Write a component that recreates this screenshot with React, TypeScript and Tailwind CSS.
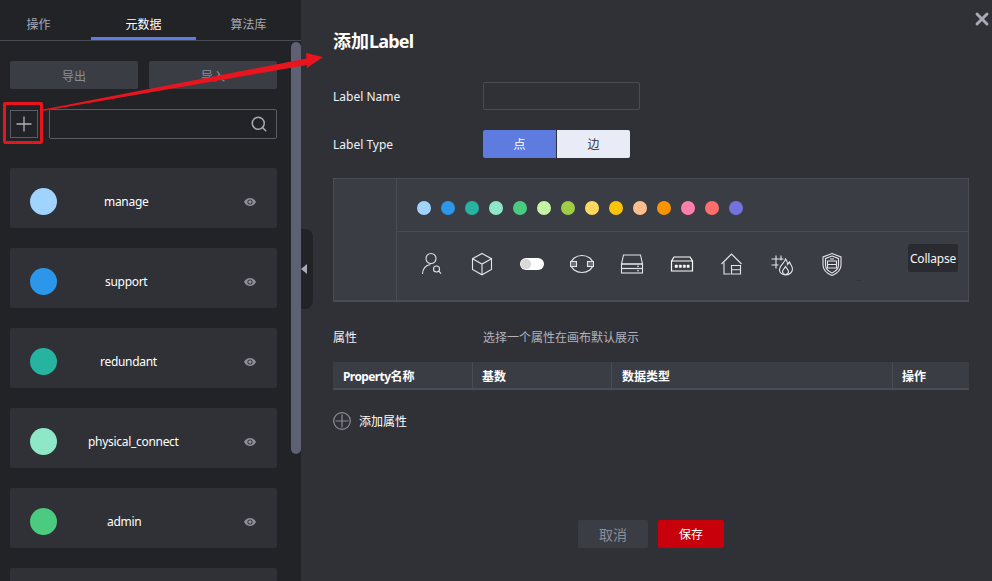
import { Search, Plus, X } from "lucide-react";

const labels = [
  { name: "manage", color: "bg-[#a0d4ff]", offset: "ml-[47px]" },
  { name: "support", color: "bg-[#2b96ea]", offset: "ml-[48px]" },
  { name: "redundant", color: "bg-[#26b3a0]", offset: "ml-[43px]" },
  { name: "physical_connect", color: "bg-[#8ee8c8]", offset: "ml-[31px]" },
  { name: "admin", color: "bg-[#4acb80]", offset: "ml-[50px]" },
  { name: "", color: "bg-[#c5f4a6]", offset: "ml-[50px]" },
];

const dots = [
  "bg-[#a0d4ff]",
  "bg-[#2b96ea]",
  "bg-[#26b3a0]",
  "bg-[#8ee8c8]",
  "bg-[#4acb80]",
  "bg-[#c5f4a6]",
  "bg-[#9dcc45]",
  "bg-[#ffd95f]",
  "bg-[#fdc50a]",
  "bg-[#ffbf8d]",
  "bg-[#f79400]",
  "bg-[#ff7eab]",
  "bg-[#ff6e6a]",
  "bg-[#7373dd]",
];

function IconSvg({ children }: { children: React.ReactNode }) {
  return (
    <svg width="24" height="24" viewBox="0 0 24 24" fill="none" stroke="#e4e5ea" strokeWidth="1.1">
      {children}
    </svg>
  );
}

function EyeMark() {
  return (
    <svg width="12" height="8" viewBox="0 0 12 8" className="ml-auto shrink-0">
      <path d="M0 4C1.500 1.500 3.500 0 6 0s4.500 1.500 6 4c-1.500 2.500-3.500 4-6 4S1.500 6.500 0 4z" fill="#8f929c" />
      <circle cx="6" cy="4" r="2.600" fill="#303136" />
      <circle cx="6" cy="4" r="1.700" fill="#8f929c" />
    </svg>
  );
}

const icons = [
  <IconSvg key="user">
    <circle cx="11" cy="6.5" r="5" />
    <path d="M2.500 22c0-5 3-9 8-9.500" />
    <circle cx="16.500" cy="17" r="3" />
    <path d="M18.800 19.200l2.200 2.400" />
  </IconSvg>,
  <IconSvg key="box">
    <path d="M12 1.500l9.500 5.200v10.800L12 22.800l-9.500-5.300V6.700z" />
    <path d="M2.500 6.700l9.500 5.300 9.500-5.300M12 12v10.800" />
  </IconSvg>,
  <svg key="toggle" width="24" height="24" viewBox="0 0 24 24">
    <rect x="0" y="6" width="24" height="12" rx="6" fill="#fff" />
    <circle cx="6" cy="12" r="5.200" fill="#d9d9d9" />
  </svg>,
  <IconSvg key="link">
    <ellipse cx="12" cy="12" rx="11" ry="8.500" />
    <rect x="0.500" y="9.500" width="6" height="5" fill="#6b6d75" />
    <rect x="17.500" y="9.500" width="6" height="5" fill="#6b6d75" />
  </IconSvg>,
  <IconSvg key="disk">
    <path d="M3.500 3h17l2 9H1.500z" />
    <rect x="1.500" y="12" width="21" height="4.500" />
    <rect x="1.500" y="16.500" width="21" height="4.500" />
    <path d="M17 14.200h2M17 18.700h2" />
  </IconSvg>,
  <svg key="switch" width="24" height="24" viewBox="0 0 24 24" fill="none" stroke="#fff" strokeWidth="1.2">
    <path d="M1.500 9l2.500-4h16l2.500 4v10h-21zM1.500 9h21" />
    <path d="M5 13h2.500v2.500H5zM9.200 13h2.300v2.500H9.200zM13.200 13h2.300v2.500h-2.300zM17 13h2.300v2.500H17z" fill="#fff" strokeWidth="0.4" />
  </svg>,
  <IconSvg key="home">
    <path d="M1.500 12L11.500 2l10 10" />
    <path d="M4 10.500V22h6.500" />
    <path d="M11.500 13.500h9V22h-9zM11.500 17.700h9" />
  </IconSvg>,
  <IconSvg key="fire">
    <path d="M1.500 7h12M1.500 13h7M6 3.500v13M11 3.500v5" />
    <path d="M15.500 7c0 3-6 6-6 11 0 3 3 5 6 5s7-2 7-6c0-3-2-4-3-7-1 1-1.500 2-2 2.500 0-2-.5-4-2-5.500z" />
    <path d="M15.500 22.500c-2 0-3-1.500-3-3 0-2 2-3 3-5 1 2 3 3 3 5 0 1.500-1 3-3 3z" />
  </IconSvg>,
  <IconSvg key="shield">
    <path d="M12 1.500l9 3.500v8c0 5-4 8.500-9 10.500-5-2-9-5.500-9-10.500V5z" />
    <path d="M12 4l6.500 2.500v6.500c0 4-3 6.500-6.500 8-3.500-1.500-6.500-4-6.500-8V6.500z" />
    <path d="M7.500 9h9v7h-9zM7.500 12.500h9M10 7h4" />
  </IconSvg>,
];

export default function App() {
  return (
    <div className="relative flex h-[581px] w-[992px] overflow-hidden bg-[#303136] text-[12px] text-[#f0f1f5] [font-family:'Noto_Sans','Noto_Sans_CJK_SC',sans-serif]">
      {/* left panel */}
      <aside className="relative h-full w-[301px] shrink-0 overflow-hidden bg-[#222327]">
        <div className="flex h-[41px] border-b border-[#4a4b55] text-[#a8abb5]">
          <div className="flex h-[40px] w-[77px] items-center justify-center pt-[9px]">操作</div>
          <div className="ml-[14px] flex h-[40px] w-[105px] items-center justify-center border-b-[3px] border-[#5e7ce0] pt-[12px] text-white">元数据</div>
          <div className="flex h-[40px] w-[105px] items-center justify-center pt-[9px]">算法库</div>
        </div>

        <div className="mt-[20px] flex gap-[11px] px-[10px]">
          <div className="flex h-[28px] w-[128px] items-center justify-center rounded-[2px] bg-[#3b3d45] pt-[3px] text-[#8a8e99]">导出</div>
          <div className="flex h-[28px] w-[128px] items-center justify-center rounded-[2px] bg-[#3b3d45] pt-[3px] text-[#8a8e99]">导入</div>
        </div>

        <div className="mt-[20px] flex items-center gap-[11px] px-[10px]">
          <div className="flex h-[28px] w-[28px] items-center justify-center border border-[#5a5c66] text-[#b0b3bc]">
            <Plus size={24} strokeWidth={1.3} />
          </div>
          <div className="flex h-[30px] w-[228px] items-center justify-end rounded-[2px] border border-[#5a5c66] pr-[8px] text-[#a8abb5]">
            <Search size={18} strokeWidth={2} />
          </div>
        </div>

        <div className="mt-[29px] flex flex-col gap-[20px] pl-[10px]">
          {labels.map((item, i) => (
            <div key={i} className="flex h-[60px] w-[267px] shrink-0 items-center rounded-[2px] bg-[#303136] pl-[20px] pr-[21px] pt-[7px]">
              <span className={`h-[27px] w-[27px] shrink-0 rounded-full ${item.color}`} />
              <span className={`whitespace-nowrap tracking-[-0.3px] text-white ${item.offset}`}>{item.name}</span>
              <EyeMark />
            </div>
          ))}
        </div>

        {/* scrollbar */}
        <div className="absolute left-[291px] top-[42px] h-[412px] w-[10px] rounded-[5px] bg-[#5e6174]" />
      </aside>

      {/* collapse handle */}
      <div className="absolute left-[301px] top-[229px] flex h-[80px] w-[12px] items-center rounded-r-[8px] bg-[#222327]">
        <span className="h-0 w-0 border-y-[5px] border-r-[6px] border-y-transparent border-r-[#a7a9b5]" />
      </div>

      {/* right panel */}
      <main className="flex-1 pl-[32px] pr-[23px] pt-[28px]">
        <h1 className="text-[18px] font-bold leading-[26px] text-white">
          添加<span className="tracking-[-0.8px]">Label</span>
        </h1>

        <div className="mt-[28px] flex h-[28px] items-center">
          <span className="w-[150px] pt-[2px]">Label Name</span>
          <div className="h-[28px] w-[157px] rounded-[2px] border border-[#4a4c55]" />
        </div>

        <div className="mt-[20px] flex h-[28px] items-center">
          <span className="w-[150px] pt-[2px]">Label Type</span>
          <div className="flex gap-px">
            <div className="flex h-[28px] w-[73px] items-center justify-center rounded-l-[2px] bg-[#5e7ce0] pt-[2px] text-white">点</div>
            <div className="flex h-[28px] w-[73px] items-center justify-center rounded-r-[2px] bg-[#e8ecf7] pt-[2px] text-[#333]">边</div>
          </div>
        </div>

        <div className="relative mt-[20px] flex h-[124px] w-[636px] border border-b-2 border-[#4a4c55] bg-[#3b3d45]">
          <div className="w-[63px] shrink-0 border-r border-[#4a4c55]" />
          <div className="flex flex-1 flex-col">
            <div className="flex h-[53px] items-center gap-[10px] border-b border-[#4a4c55] pl-[20px] pt-[6px]">
              {dots.map((dot, i) => (
                <span key={i} className={`h-[14px] w-[14px] rounded-full ${dot}`} />
              ))}
            </div>
            <div className="flex flex-1 items-start pl-[23px] pt-[20px]">
              <div className="flex gap-[26px]">
                {icons.map((icon, i) => (
                  <div key={i} className="h-[24px] w-[24px]">
                    {icon}
                  </div>
                ))}
              </div>
              <div className="-mt-[8px] ml-[64px] flex h-[28px] w-[50px] items-center justify-center rounded-[2px] bg-[#2a2b30] pt-[2px] tracking-[-0.2px] text-[#f5f6fa]">Collapse</div>
            </div>
          </div>
          <span className="absolute left-[522px] top-[98px] text-[7px] leading-[8px] text-[#2a2b30]">···</span>
        </div>

        <div className="mt-[26px] flex h-[18px] items-center">
          <span className="w-[150px] pt-[2px]">属性</span>
          <span className="pt-[2px] text-[#b0b3bc]">选择一个属性在画布默认展示</span>
        </div>

        <div className="mt-[16px] flex h-[28px] w-[636px] border-b-2 border-[#4a4c55] bg-[#3b3d45] font-bold text-white">
          <div className="flex w-[140px] items-center border-r border-[#4a4c55] pl-[10px] pt-[4px]">
            <span className="tracking-[-0.6px]">Property</span>名称
          </div>
          <div className="flex w-[139px] items-center border-r border-[#4a4c55] pl-[9px] pt-[4px]">基数</div>
          <div className="flex w-[281px] items-center border-r border-[#4a4c55] pl-[10px] pt-[4px]">数据类型</div>
          <div className="flex flex-1 items-center pl-[9px] pt-[4px]">操作</div>
        </div>

        <div className="mt-[22px] flex h-[18px] items-center gap-[8px]">
          <svg width="18" height="18" viewBox="0 0 18 18" fill="none" stroke="#8a8e99" strokeWidth="1.2">
            <circle cx="9" cy="9" r="8.300" />
            <path d="M9 2.500v13M2.500 9h13" />
          </svg>
          <span className="pt-[2px] text-white">添加属性</span>
        </div>

        <div className="mt-[90px] flex justify-center gap-[10px]">
          <div className="flex h-[28px] w-[70px] items-center justify-center rounded-[2px] bg-[#3b3d45] pt-[1px] text-[14px] text-[#8a8e99]">取消</div>
          <div className="flex h-[28px] w-[66px] items-center justify-center rounded-[2px] bg-[#c7000b] pt-[2px] text-white">保存</div>
        </div>
      </main>

      <X size={20} strokeWidth={3.5} className="absolute left-[972px] top-[9px] text-[#a8abb5]" />

      {/* annotation */}
      <div className="absolute left-[3px] top-[102px] h-[42px] w-[40px] rounded-[2px] border-[3px] border-[#e8141e]" />
      <svg className="absolute left-0 top-0" width="340" height="130" viewBox="0 0 340 130">
        <path d="M43 109.500L309 58l1 6.500L43 111z" fill="#e8141e" />
        <path d="M323 57L306 53l1 15z" fill="#e8141e" />
      </svg>
    </div>
  );
}
